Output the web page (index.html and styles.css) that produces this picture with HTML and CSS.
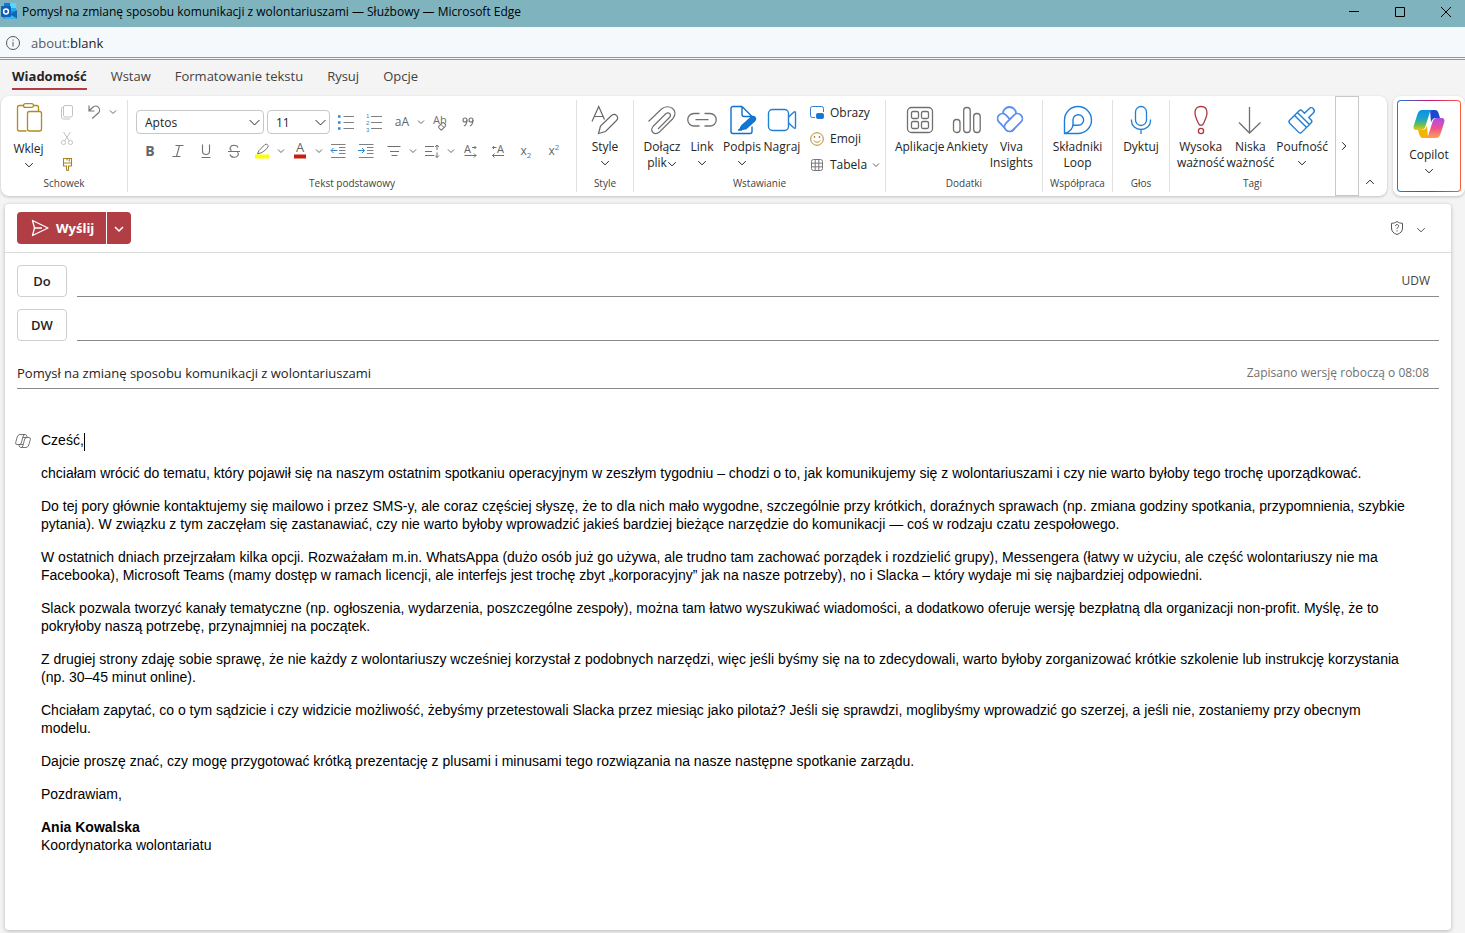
FILE: index.html
```html
<!DOCTYPE html>
<html lang="pl">
<head>
<meta charset="utf-8">
<meta name="viewport" content="width=device-width, initial-scale=1">
<title>Pomysł na zmianę sposobu komunikacji z wolontariuszami</title>
<link rel="stylesheet" href="styles.css">
</head>
<body>
<svg class="defs" width="0" height="0" aria-hidden="true">
  <symbol id="chev" viewBox="0 0 8 8"><path d="M1 2.500 4 5.500 7 2.500" fill="none" stroke="currentColor" stroke-width="1" vector-effect="non-scaling-stroke"/></symbol>
</svg>

<header class="titlebar">
  <svg class="app-icon" viewBox="0 0 18 18" aria-hidden="true">
    <rect x="4" y="0" width="12" height="10" fill="#28a8ea"/>
    <rect x="10" y="0" width="6" height="5" fill="#50d9ff"/>
    <rect x="4" y="0" width="6" height="5" fill="#0f78d4"/>
    <path d="M3 8h14v7.500H3z" fill="#1490df"/>
    <path d="M17 7 10 11.500 17 15.500z" fill="#1066b5"/>
    <path d="M3 15.500 10 11.500 17 15.500z" fill="#35b8f1"/>
    <rect x="1" y="3" width="10" height="11" rx="1" fill="#0f5fb8"/>
    <circle cx="6" cy="8.500" r="2.400" fill="none" stroke="#fff" stroke-width="1.500"/>
  </svg>
  <h1 class="window-title">Pomysł na zmianę sposobu komunikacji z wolontariuszami — Służbowy — Microsoft Edge</h1>
  <div class="window-controls">
    <button type="button" aria-label="Minimalizuj"><svg viewBox="0 0 12 12"><path d="M1 5.500h10" stroke="#000" fill="none"/></svg></button>
    <button type="button" aria-label="Maksymalizuj"><svg viewBox="0 0 12 12"><path d="M1.500 1.500h9v9h-9z" stroke="#000" fill="none"/></svg></button>
    <button type="button" aria-label="Zamknij"><svg viewBox="0 0 12 12"><path d="M1 1 11 11M11 1 1 11" stroke="#000" fill="none"/></svg></button>
  </div>
</header>

<div class="addressbar">
  <svg viewBox="0 0 16 16" aria-hidden="true"><circle cx="8" cy="8" r="6.500" fill="none" stroke="#555"/><path d="M8 7v4.500M8 4.500v1.200" stroke="#555" fill="none"/></svg>
  <span class="url">about:<span class="host">blank</span></span>
</div>

<nav class="tabs" aria-label="Karty wstążki">
  <button type="button" class="tab active">Wiadomość</button>
  <button type="button" class="tab">Wstaw</button>
  <button type="button" class="tab">Formatowanie tekstu</button>
  <button type="button" class="tab">Rysuj</button>
  <button type="button" class="tab">Opcje</button>
</nav>

<div class="ribbon-row">
  <div class="ribbon" role="toolbar" aria-label="Wstążka">
    <section class="group g-clip">
      <div class="group-body">
        <button type="button" class="big paste">
          <svg class="ico" viewBox="0 0 32 32" fill="none" stroke="#b58a1c" stroke-width="1.300"><path d="M10.500 4.500H6.500a2 2 0 0 0-2 2v21.500a2 2 0 0 0 2 2H13.500M20.500 4.500h3a2 2 0 0 1 2 2v3.500"/><rect x="10.500" y="2.600" width="10" height="3.800" rx="1.900"/><rect x="14.500" y="10.500" width="14" height="19.500" rx="2"/></svg>
          <span>Wklej</span><svg class="cv" aria-hidden="true"><use href="#chev"/></svg>
        </button>
        <div class="stack">
          <button type="button" class="tool" aria-label="Kopiuj"><svg viewBox="0 0 16 16" fill="none" stroke="#c3c3c3"><rect x="4.500" y="1.500" width="9" height="11.500" rx="1.500"/><path d="M4 3.500H3.500a1 1 0 0 0-1 1V13a2 2 0 0 0 2 2H11"/></svg></button>
          <button type="button" class="tool" aria-label="Wytnij"><svg viewBox="0 0 16 16" fill="none" stroke="#c3c3c3"><path d="M4.500 2 10.500 11M11.500 2 5.500 11"/><circle cx="4.500" cy="12.500" r="2.100"/><circle cx="11.500" cy="12.500" r="2.100"/></svg></button>
          <button type="button" class="tool" aria-label="Malarz formatów"><svg viewBox="0 0 16 16" fill="none" stroke="#a98424" stroke-width="1.100"><path d="M4.500 2.500h8v7.500h-3v3.500a1 1 0 0 1-2 0V10h-3z"/><path d="M4.500 7h8M8 2.500v2M10.300 2.500v3"/></svg></button>
        </div>
        <div class="undo">
          <button type="button" class="tool" aria-label="Cofnij"><svg viewBox="0 0 16 16" fill="none" stroke="#7a7a7a" stroke-width="1.200"><path d="M3 1.500v5.500h5.500M3.200 6.800 6.600 3.500a4 4 0 0 1 6 5.300L6.200 14.500"/></svg></button>
          <button type="button" class="mini" aria-label="Więcej opcji cofania"><svg class="cs"><use href="#chev"/></svg></button>
        </div>
      </div>
      <h2>Schowek</h2>
    </section>

    <section class="group g-text">
      <div class="group-body rows">
        <div class="line first">
          <label class="combo font-name"><select aria-label="Czcionka"><option>Aptos</option></select><svg><use href="#chev"/></svg></label>
          <label class="combo font-size"><select aria-label="Rozmiar czcionki"><option>11</option></select><svg><use href="#chev"/></svg></label>
          <button type="button" class="tool" aria-label="Punktory"><svg viewBox="0 0 16 16" fill="none" stroke="#808080"><path d="M5.500 2.500H16M5.500 8.500H16M5.500 14.500H16"/><path d="M0 2.500h2.500M0 8.500h2.500M0 14.500h2.500" stroke="#2b88d8" stroke-width="2.500"/></svg></button>
          <button type="button" class="tool" aria-label="Numerowanie"><svg viewBox="0 0 16 16" fill="none" stroke="#808080"><path d="M5 2.500H16M5 8.500H16M5 14.500H16"/><g class="nums"><text x="0" y="4">1</text><text x="0" y="11">2</text><text x="0" y="18">3</text></g></svg></button>
          <button type="button" class="tool glyph" aria-label="Zmień wielkość liter">aA</button>
          <button type="button" class="mini" aria-label="Opcje wielkości liter"><svg class="cs"><use href="#chev"/></svg></button>
          <button type="button" class="tool" aria-label="Wyczyść formatowanie"><svg viewBox="0 0 16 16"><text class="ab" x="1" y="10">Ab</text><rect x="8" y="8.500" width="4.500" height="7" rx="1" transform="rotate(45 10 12)" fill="#fff" stroke="#6e6e6e"/><path d="M9 10.500 12.500 14" stroke="#6e6e6e"/></svg></button>
          <button type="button" class="tool" aria-label="Cytat"><svg viewBox="0 0 16 16" fill="none" stroke="#707070" stroke-width="1.100"><circle cx="5" cy="6" r="2"/><path d="M7 6c0 3-1 5-3 6"/><circle cx="11" cy="6" r="2"/><path d="M13 6c0 3-1 5-3 6"/></svg></button>
        </div>
        <div class="line">
          <button type="button" class="tool glyph bold" aria-label="Pogrubienie">B</button>
          <button type="button" class="tool" aria-label="Kursywa"><svg viewBox="0 0 16 16" fill="none" stroke="#707070" stroke-width="1.100"><path d="M5.500 2.500h8M2.500 13.500h8M9.500 2.500l-3 11"/></svg></button>
          <button type="button" class="tool" aria-label="Podkreślenie"><svg viewBox="0 0 16 16" fill="none" stroke="#707070" stroke-width="1.100"><path d="M4.500 1.500v6.500a3.500 3.500 0 0 0 7 0V1.500M3.500 14.500h9"/></svg></button>
          <button type="button" class="tool" aria-label="Przekreślenie"><svg viewBox="0 0 16 16" fill="none" stroke="#707070" stroke-width="1.100"><path d="M2 8.500h12M12 4.500C11.500 3 10 2.300 8 2.300c-4 0-5 3.700-2.500 5.200M4 11.500c.5 1.800 2 2.700 4 2.700 4 0 5.300-3 3.500-5.200"/></svg></button>
          <button type="button" class="tool marker" aria-label="Wyróżnienie"><svg viewBox="0 0 16 16" fill="none" stroke="#707070"><path d="M5 7.500 11 1.500q2-1.200 3 1T8 9.500L3.500 11z"/><path d="M1 13.500h14" stroke="#ff0" stroke-width="4"/></svg></button>
          <button type="button" class="mini" aria-label="Kolor wyróżnienia"><svg class="cs"><use href="#chev"/></svg></button>
          <button type="button" class="tool" aria-label="Kolor czcionki"><svg viewBox="0 0 16 16"><text class="fc" x="4" y="9">A</text><path d="M2 13.500h12" stroke="#c81e10" stroke-width="4"/></svg></button>
          <button type="button" class="mini" aria-label="Wybierz kolor czcionki"><svg class="cs"><use href="#chev"/></svg></button>
          <button type="button" class="tool" aria-label="Zmniejsz wcięcie"><svg viewBox="0 0 16 16" fill="none" stroke="#808080"><path d="M1 1.500H15.500M9 4.500h6.500M9 7.500h6.500M9 10.500h6.500M1 14.500H15.500"/><path d="M7.500 7.500H1M3.500 5 1 7.500 3.500 10" stroke="#2b88d8"/></svg></button>
          <button type="button" class="tool" aria-label="Zwiększ wcięcie"><svg viewBox="0 0 16 16" fill="none" stroke="#808080"><path d="M1 1.500H15.500M9 4.500h6.500M9 7.500h6.500M9 10.500h6.500M1 14.500H15.500"/><path d="M0 7.500h6.500M4 5l2.500 2.500L4 10" stroke="#2b88d8"/></svg></button>
          <button type="button" class="tool" aria-label="Wyrównanie"><svg viewBox="0 0 16 16" fill="none" stroke="#707070"><path d="M1.500 3.500H14.500M4 8.500h9M5.500 12.500h6"/></svg></button>
          <button type="button" class="mini" aria-label="Opcje wyrównania"><svg class="cs"><use href="#chev"/></svg></button>
          <button type="button" class="tool" aria-label="Interlinia"><svg viewBox="0 0 16 16" fill="none" stroke="#707070"><path d="M1 3.500h9M1 8.500h7M1 12.500h9M13 2v5M13 9.500v5M11 4l2-2 2 2M11 12.500l2 2 2-2"/></svg></button>
          <button type="button" class="mini" aria-label="Opcje interlinii"><svg class="cs"><use href="#chev"/></svg></button>
          <button type="button" class="tool" aria-label="Od lewej do prawej"><svg viewBox="0 0 16 16" fill="none" stroke="#707070"><text class="dir" x="2" y="10">A</text><path d="M10 4.500h4M12.500 3 14 4.500 12.500 6M2.500 12.500H14M12 10.500l2 2-2 2"/></svg></button>
          <button type="button" class="tool" aria-label="Od prawej do lewej"><svg viewBox="0 0 16 16" fill="none" stroke="#707070"><text class="dir" x="7" y="10">A</text><path d="M6.500 4.500H2.500M4 3 2.500 4.500 4 6M14 12.500H2.500M4.500 10.500l-2 2 2 2"/></svg></button>
          <button type="button" class="tool glyph" aria-label="Indeks dolny">x<sub>2</sub></button>
          <button type="button" class="tool glyph" aria-label="Indeks górny">x<sup>2</sup></button>
        </div>
      </div>
      <h2>Tekst podstawowy</h2>
    </section>

    <section class="group g-style">
      <div class="group-body">
        <button type="button" class="big"><svg class="ico" viewBox="0 0 32 32" fill="none" stroke="#666" stroke-width="1.200"><path d="M3 17.500 9.700 2.500 15.500 15.500M5.500 12.500h8.500"/><path d="M9.500 29.500 11.500 22 22.500 11.500c4-3 8 1.500 5 5L16.500 27.500z"/></svg><span>Style</span><svg class="cv"><use href="#chev"/></svg></button>
      </div>
      <h2>Style</h2>
    </section>

    <section class="group g-insert">
      <div class="group-body">
        <button type="button" class="big"><svg class="ico" viewBox="0 0 32 32" fill="none" stroke="#707070" stroke-width="1.200"><path d="M2.500 17.500 15.500 5c7-6 18 1 11.500 9.500L13.500 28c-5 4-10-1-6.500-5.500L20 9.500c3-2 6 1 3.500 4L12 25"/></svg><span>Dołącz<br>plik<svg class="cv in"><use href="#chev"/></svg></span></button>
        <button type="button" class="big"><svg class="ico" viewBox="0 0 32 32" fill="none" stroke="#707070" stroke-width="1.300"><path d="M13.500 9.500H8a6 6 0 0 0 0 12.500h5.500M18.500 9.500H24a6 6 0 0 1 0 12.500h-5.500M9.500 15.700h13"/></svg><span>Link</span><svg class="cv"><use href="#chev"/></svg></button>
        <button type="button" class="big"><svg class="ico" viewBox="0 0 32 32" fill="none" stroke="#0f6fd0" stroke-width="1.400"><path d="M16 2.500H7a2 2 0 0 0-2 2v23a2 2 0 0 0 2 2h17a2 2 0 0 0 2-2v-5M16 2.500v8a2 2 0 0 0 2 2h8M16 2.500l10 10"/><path d="M12 26h4M13 26c2-1 1-2 3-4.500l9-8c3-3 6 1 3.500 3.500l-8.500 7.500z" fill="#0f78d4"/></svg><span>Podpis</span><svg class="cv"><use href="#chev"/></svg></button>
        <button type="button" class="big"><svg class="ico" viewBox="0 0 32 32" fill="none" stroke="#1f7fd6" stroke-width="1.400"><rect x="2.500" y="5.500" width="20" height="21" rx="4"/><path d="M22.500 13 28 8q1.500-1 1.500 1v14q0 2-1.500 1l-5.500-5"/></svg><span>Nagraj</span></button>
        <div class="stack labelled">
          <button type="button" class="small"><svg viewBox="0 0 16 16" fill="none" stroke="#2b7cd3"><path d="M6 12.500H3.500a2 2 0 0 1-2-2v-7a2 2 0 0 1 2-2h9a2 2 0 0 1 2 2V7"/><rect x="7.500" y="8.500" width="7" height="5" rx="1" fill="#0f78d4"/></svg>Obrazy</button>
          <button type="button" class="small"><svg viewBox="0 0 16 16" fill="none" stroke="#b5892b"><circle cx="8" cy="8" r="6.300"/><path d="M4.800 9.500c1.500 2.300 5 2.300 6.400 0"/><path d="M5.500 5v2M10.500 5v2" stroke-width="1.300"/></svg>Emoji</button>
          <button type="button" class="small"><svg viewBox="0 0 16 16" fill="none" stroke="#777"><rect x="2.500" y="2.500" width="11" height="11" rx="2"/><path d="M6.200 2.500v11M9.800 2.500v11M2.500 6.200h11M2.500 9.800h11"/></svg>Tabela<svg class="cs tail"><use href="#chev"/></svg></button>
        </div>
      </div>
      <h2>Wstawianie</h2>
    </section>

    <section class="group g-addins">
      <div class="group-body">
        <button type="button" class="big"><svg class="ico" viewBox="0 0 32 32" fill="none" stroke="#707070" stroke-width="1.300"><rect x="3.500" y="3.500" width="25" height="25" rx="4"/><rect x="7.500" y="7.500" width="7" height="7" rx="1.500"/><rect x="17.500" y="7.500" width="7" height="7" rx="1.500"/><rect x="7.500" y="17.500" width="7" height="7" rx="1.500"/><rect x="17.500" y="17.500" width="7" height="7" rx="1.500"/></svg><span>Aplikacje</span></button>
        <button type="button" class="big"><svg class="ico" viewBox="0 0 32 32" fill="none" stroke="#707070" stroke-width="1.300"><rect x="2.500" y="15.500" width="6.500" height="13" rx="3"/><rect x="12.700" y="3.500" width="6.500" height="25" rx="3"/><rect x="22.700" y="9.500" width="6.500" height="19" rx="3"/></svg><span>Ankiety</span></button>
        <button type="button" class="big viva"><svg class="ico" viewBox="0 0 32 32" fill="none" stroke-linecap="round"><circle cx="14.500" cy="9.500" r="6.500" stroke="#5b8def" stroke-width="1.800"/><path d="M7.500 14.500 15 22.500" stroke="#5b8def" stroke-width="11.500"/><path d="M7.500 14.500 15 22.500" stroke="#fff" stroke-width="8"/><path d="M22.500 14.500 14.500 22.500" stroke="#5b8def" stroke-width="11.500"/><path d="M22.500 14.500 14.500 22.500" stroke="#fff" stroke-width="8"/></svg><span>Viva<br>Insights</span></button>
      </div>
      <h2>Dodatki</h2>
    </section>

    <section class="group g-loop">
      <div class="group-body">
        <button type="button" class="big"><svg class="ico" viewBox="0 0 32 32" fill="none" stroke="#1f7fd6" stroke-width="1.400"><path d="M2.500 29.500V16A13.500 13.500 0 1 1 16 29.500zM2.500 29.500c5-1.500 8.500-5 8.500-9.500v-4a5.300 5.300 0 1 1 5.300 5.300H11"/></svg><span>Składniki<br>Loop</span></button>
      </div>
      <h2>Współpraca</h2>
    </section>

    <section class="group g-voice">
      <div class="group-body">
        <button type="button" class="big"><svg class="ico" viewBox="0 0 32 32" fill="none" stroke="#1f7fd6" stroke-width="1.300"><rect x="10.500" y="2.500" width="11" height="19" rx="5.500"/><path d="M6.500 15.500v1.500a9.500 8.500 0 0 0 19 0v-1.500M16 25.500v4.500"/></svg><span>Dyktuj</span></button>
      </div>
      <h2>Głos</h2>
    </section>

    <section class="group g-tags">
      <div class="group-body">
        <button type="button" class="big"><svg class="ico" viewBox="0 0 32 32" fill="none" stroke="#b0363c" stroke-width="1.300"><path d="M16 2.500c4 0 6 2.500 6 6 0 4-2 8-3.500 11-1 2.500-4 2.500-5 0C12 16.500 10 12.500 10 8.500c0-3.500 2-6 6-6z"/><circle cx="16" cy="27" r="2.600"/></svg><span>Wysoka<br>ważność</span></button>
        <button type="button" class="big"><svg class="ico" viewBox="0 0 32 32" fill="none" stroke="#707070" stroke-width="1.300"><path d="M15.500 3v26M5 18.500 15.500 29 26.500 18.500"/></svg><span>Niska<br>ważność</span></button>
        <button type="button" class="big"><svg class="ico" viewBox="0 0 32 32" fill="none" stroke="#1f7fd6" stroke-width="1.400" stroke-linejoin="round"><g transform="rotate(45 16 16)"><path d="M13 9.500V3a3 3 0 0 1 6 0v6.500h3.500a2 2 0 0 1 2 2V25a2 2 0 0 1-2 2h-13a2 2 0 0 1-2-2V11.500a2 2 0 0 1 2-2zM7.500 14h17M7.500 18h17"/></g></svg><span>Poufność</span><svg class="cv"><use href="#chev"/></svg></button>
      </div>
      <h2>Tagi</h2>
    </section>

    <button type="button" class="more" aria-label="Więcej opcji"><svg class="cv right"><use href="#chev"/></svg></button>
    <button type="button" class="collapse" aria-label="Zwiń wstążkę"><svg class="cv up"><use href="#chev"/></svg></button>
  </div>

  <div class="copilot-card">
    <button type="button" class="copilot">
      <svg class="ico" viewBox="0 0 32 32" aria-hidden="true">
        <defs>
          <linearGradient id="ca" x1="0" y1="0" x2="0" y2="1"><stop offset="0" stop-color="#0a8fe8"/><stop offset=".45" stop-color="#1ea6c9"/><stop offset=".75" stop-color="#6cc04a"/><stop offset="1" stop-color="#f2c811"/></linearGradient>
          <linearGradient id="cb" x1="0" y1="0" x2="0" y2="1"><stop offset="0" stop-color="#a84df0"/><stop offset=".5" stop-color="#ee5090"/><stop offset="1" stop-color="#ffa34d"/></linearGradient>
        </defs>
        <path d="M17 2h5q2.500 0 3.500 3l1.500 5h-4c-3 0-4 1.500-5 4.500z" fill="#1b48cf"/>
        <path d="M15 30h-5q-2.500 0-3.500-3L5 22h4c3 0 4-1.500 5-4.500z" fill="#f4b400"/>
        <path d="M9 2h11c-2 0-3 1.500-3.500 3.500L12.500 18c-1 3-2 4-4.500 4H4c-3.500 0-4-2-3-5L4.500 6Q6 2 9 2z" fill="url(#ca)"/>
        <path d="M23 30H12c2 0 3-1.500 3.500-3.500L19.500 14c1-3 2-4 4.500-4h4c3.500 0 4 2 3 5l-3.500 11q-1.500 4-4.500 4z" fill="url(#cb)"/>
      </svg>
      <span>Copilot</span><svg class="cv"><use href="#chev"/></svg>
    </button>
  </div>
</div>

<main class="mail">
  <div class="actions">
    <div class="send-split">
      <button type="button" class="send"><svg viewBox="0 0 18 18" fill="none" stroke="#fff" stroke-width="1.300" stroke-linejoin="round"><path d="M1.500 1.500 17 9 1.500 16.500 3.500 9zM3.500 9H11"/></svg>Wyślij</button>
      <button type="button" class="send-more" aria-label="Więcej opcji wysyłania"><svg class="cl" viewBox="0 0 12 12" fill="none" stroke="#fff" stroke-width="1.500"><path d="M2 5l4 4 4-4"/></svg></button>
    </div>
    <div class="sensitivity">
      <button type="button" aria-label="Poufność wiadomości"><svg class="shield" viewBox="0 0 16 16" fill="none" stroke="#555"><path d="M8 1.500c1.500 1.200 3.200 1.700 5.500 1.800V8c0 3.300-2 5.300-5.500 6.500C4.500 13.300 2.500 11.300 2.500 8V3.300C4.800 3.200 6.500 2.700 8 1.500z"/><path d="M6.300 6.200c0-2.300 3.500-2 3.300 0C9.500 7.500 8 7.500 8 9M8 10.200v1.200"/></svg></button>
      <button type="button" aria-label="Opcje poufności"><svg class="cv soft"><use href="#chev"/></svg></button>
    </div>
  </div>

  <div class="fields">
    <div class="recipient">
      <button type="button" class="pick">Do</button>
      <div class="well"><input type="text" aria-label="Do"><button type="button" class="bcc">UDW</button></div>
    </div>
    <div class="recipient">
      <button type="button" class="pick">DW</button>
      <div class="well"><input type="text" aria-label="DW"></div>
    </div>
    <div class="subject">
      <input type="text" aria-label="Temat" value="Pomysł na zmianę sposobu komunikacji z wolontariuszami">
      <span class="saved">Zapisano wersję roboczą o 08:08</span>
    </div>
  </div>

  <div class="editor">
    <button type="button" class="hint" aria-label="Copilot w wierszu"><svg viewBox="0 0 16 16" fill="none" stroke="#666" stroke-width=".9"><path d="M5 1.500h5q1.300 0 1.800 1.500l.5 1.500H14q1.800 0 1.300 2l-1.500 5.500q-.8 2.500-2.800 2.500H6q-1.300 0-1.800-1.500L3.700 11.500H2Q.2 11.500.7 9.500L2.200 4Q3 1.500 5 1.500zM10 1.500Q8.700 1.500 8.200 3L6.300 10q-.5 1.500-2.600 1.500M6 14.500q1.300 0 1.800-1.500L9.700 6q.5-1.500 2.600-1.500M7.800 4.500h4.500M3.700 11.500h4.500"/></svg></button>
    <div class="message" role="textbox" aria-label="Treść wiadomości" aria-multiline="true">
      <p>Cześć,<span class="caret"></span></p>
      <p>chciałam wrócić do tematu, który pojawił się na naszym ostatnim spotkaniu operacyjnym w zeszłym tygodniu – chodzi o to, jak komunikujemy się z wolontariuszami i czy nie warto byłoby tego trochę uporządkować.</p>
      <p>Do tej pory głównie kontaktujemy się mailowo i przez SMS-y, ale coraz częściej słyszę, że to dla nich mało wygodne, szczególnie przy krótkich, doraźnych sprawach (np. zmiana godziny spotkania, przypomnienia, szybkie pytania). W związku z tym zaczęłam się zastanawiać, czy nie warto byłoby wprowadzić jakieś bardziej bieżące narzędzie do komunikacji — coś w rodzaju czatu zespołowego.</p>
      <p>W ostatnich dniach przejrzałam kilka opcji. Rozważałam m.in. WhatsAppa (dużo osób już go używa, ale trudno tam zachować porządek i rozdzielić grupy), Messengera (łatwy w użyciu, ale część wolontariuszy nie ma Facebooka), Microsoft Teams (mamy dostęp w ramach licencji, ale interfejs jest trochę zbyt „korporacyjny” jak na nasze potrzeby), no i Slacka – który wydaje mi się najbardziej odpowiedni.</p>
      <p>Slack pozwala tworzyć kanały tematyczne (np. ogłoszenia, wydarzenia, poszczególne zespoły), można tam łatwo wyszukiwać wiadomości, a dodatkowo oferuje wersję bezpłatną dla organizacji non-profit. Myślę, że to pokryłoby naszą potrzebę, przynajmniej na początek.</p>
      <p>Z drugiej strony zdaję sobie sprawę, że nie każdy z wolontariuszy wcześniej korzystał z podobnych narzędzi, więc jeśli byśmy się na to zdecydowali, warto byłoby zorganizować krótkie szkolenie lub instrukcję korzystania (np. 30–45 minut online).</p>
      <p>Chciałam zapytać, co o tym sądzicie i czy widzicie możliwość, żebyśmy przetestowali Slacka przez miesiąc jako pilotaż? Jeśli się sprawdzi, moglibyśmy wprowadzić go szerzej, a jeśli nie, zostaniemy przy obecnym modelu.</p>
      <p>Dajcie proszę znać, czy mogę przygotować krótką prezentację z plusami i minusami tego rozwiązania na nasze następne spotkanie zarządu.</p>
      <p>Pozdrawiam,</p>
      <p><strong>Ania Kowalska</strong><br>Koordynatorka wolontariatu</p>
    </div>
  </div>
</main>
</body>
</html>
```
FILE: styles.css
```css
* { box-sizing: border-box; }

body {
  margin: 0;
  min-height: 100vh;
  display: flex;
  flex-direction: column;
  background: #f4f4f4;
  color: #242424;
  font: 13px/20px "Open Sans", "Noto Sans", sans-serif;
}

button, input, select { font: inherit; color: inherit; }
button { background: none; border: 0; padding: 0; }
h1, h2, p { margin: 0; font-weight: 400; }
svg { display: block; flex: none; }
.defs { position: absolute; }

/* window chrome */
.titlebar {
  display: flex;
  align-items: center;
  height: 27px;
  padding-bottom: 3px;
  background: #7fb4be;
  color: #000;
}
.app-icon { width: 18px; height: 18px; }
.window-title { flex: 1; margin-left: 4px; font-size: 12px; line-height: 20px; }
.window-controls { display: flex; }
.window-controls button { width: 46px; height: 24px; display: grid; place-items: center; }
.window-controls button:last-child { width: 42px; padding-left: 4px; }
.window-controls svg { width: 12px; height: 12px; }

.addressbar {
  display: flex;
  align-items: center;
  gap: 10px;
  height: 33px;
  padding: 2px 5px 0;
  background: #f5f9fb;
  border-bottom: 3px double #7f9f9f;
}
.addressbar svg { width: 16px; height: 16px; }
.url { color: #5a5a5a; font-size: 13px; }
.host { color: #1b1b1b; }

/* ribbon tabs */
.tabs { display: flex; gap: 24px; height: 36px; padding: 5px 12px; }
.tab { height: 25px; padding-bottom: 1px; border-bottom: 2px solid transparent; color: #424242; line-height: 20px; }
.tab.active { font-weight: 700; color: #242424; border-color: #b33c44; }

/* ribbon */
.ribbon-row { display: flex; gap: 6px; padding-left: 1px; }
.ribbon, .copilot-card {
  background: #fff;
  border-radius: 8px;
  box-shadow: 0 1px 3px rgba(0, 0, 0, .22);
}
.ribbon { flex: 1; display: flex; font-size: 12px; line-height: 16px; }
.group {
  display: flex;
  flex-direction: column;
  margin: 4px 0;
  border-right: 1px solid #e0e0e0;
}
.group-body { display: flex; height: 75px; padding-top: 4px; justify-content: center; }
.group h2 { font-size: 10px; line-height: 16px; text-align: center; color: #424242; }
.g-clip { width: 127px; }
.g-text { width: 449px; }
.g-style { width: 57px; }
.g-insert { width: 252px; }
.g-addins { width: 157px; }
.g-loop { width: 70px; }
.g-voice { width: 57px; }
.g-tags { width: 165px; border-right: 0; }
.g-clip .group-body, .g-insert .group-body { justify-content: flex-start; }
.g-insert .group-body { padding-left: 8px; }
.g-addins .group-body, .g-tags .group-body { gap: 2px; }

.big { display: flex; flex-direction: column; align-items: center; min-width: 40px; }
.big > span { margin-top: 3px; }
.ico { width: 32px; height: 32px; }
.cv { width: 10px; height: 10px; margin-top: 3px; }
.cs { width: 8px; height: 8px; }
.cl { width: 12px; height: 12px; }
.cv.in { display: inline-block; margin: 0; vertical-align: -2px; }
.paste { width: 55px; margin-top: -3px; }
.paste > span { margin-top: 8px; }

.tool { width: 28px; height: 24px; flex: none; display: grid; place-items: center; }
.tool svg { width: 16px; height: 16px; overflow: visible; }
.mini { width: 10px; height: 24px; display: grid; place-items: center; color: #666; }
.stack { display: flex; flex-direction: column; margin-top: -4px; gap: 2px; }
.g-clip .stack { width: 22px; align-items: center; }
.undo { display: flex; align-items: flex-start; margin: -4px 0 0 2px; }

.rows { flex-direction: column; justify-content: flex-start; padding: 10px 8px 0; gap: 5px; }
.line { display: flex; height: 24px; }
.combo { position: relative; display: flex; margin-right: 3px; }
.combo.font-size { margin-right: 2px; }
.combo select {
  appearance: none;
  width: 100%;
  height: 24px;
  padding: 1px 20px 0 8px;
  background: #fff;
  border: 1px solid #c7c7c7;
  border-radius: 4px;
}
.combo svg { position: absolute; right: 3px; top: 6px; width: 13px; height: 13px; pointer-events: none; }
.font-name { width: 128px; }
.font-size { width: 63px; }
.glyph { display: flex; align-items: center; justify-content: center; color: #666; }
.glyph.bold { font-size: 14px; font-weight: 700; }
.glyph sub, .glyph sup { font-size: 8px; line-height: 8px; color: #2b88d8; }
.glyph sub { align-self: flex-end; margin-bottom: 4px; }
.glyph sup { align-self: flex-start; margin-top: 4px; }
.nums text { font-family: "Liberation Sans", sans-serif; font-size: 6px; fill: #2b88d8; stroke: none; }
.ab { font-size: 11px; fill: #6e6e6e; }
.fc { font-size: 13px; fill: #666; }
.dir { font-size: 11px; fill: #666; stroke: none; }

.small { display: flex; align-items: center; gap: 5px; height: 24px; flex: none; }
.small > svg:first-child { width: 16px; height: 16px; }
.labelled { margin: -3px 0 0 7px; }
.tail { color: #666; }

.more {
  width: 24px;
  display: grid;
  place-items: center;
  padding-right: 6px;
  border: 1px solid #c8c8c8;
}
.right { margin: 0; transform: rotate(-90deg); }
.collapse { margin-top: auto; padding: 9px 6px; }
.up { margin: 0; transform: rotate(180deg); }

.copilot-card { padding: 4px; }
.copilot {
  width: 64px;
  height: 92px;
  display: flex;
  flex-direction: column;
  align-items: center;
  padding-top: 7px;
  border: 1px solid transparent;
  border-radius: 4px;
  background: linear-gradient(#fff, #fff) padding-box, linear-gradient(90deg, #0f86d8, #c3127f 50%, #ff5f3d) border-box;
  font-size: 12px;
  line-height: 16px;
}
.copilot span { margin-top: 7px; }

/* message card */
.mail {
  flex: 1;
  margin: 8px 14px 4px 5px;
  background: #fff;
  border-radius: 4px;
  box-shadow: 0 1px 4px rgba(0, 0, 0, .25);
}
.actions {
  display: flex;
  justify-content: space-between;
  align-items: center;
  padding: 8px 12px;
  border-bottom: 1px solid #dcdcdc;
}
.send-split { display: flex; gap: 1px; }
.send, .send-more { height: 32px; background: #b13e45; color: #fff; display: flex; align-items: center; }
.send { gap: 7px; padding: 0 12px 0 14px; border-radius: 4px 0 0 4px; font-weight: 700; }
.send svg { width: 18px; height: 18px; }
.send-more { width: 24px; justify-content: center; border-radius: 0 4px 4px 0; }
.sensitivity { display: flex; align-items: center; gap: 11px; margin-right: 13px; }
.shield { width: 16px; height: 16px; }
.soft { color: #555; }

.fields { padding: 12px 12px 0; }
.recipient { display: flex; gap: 10px; margin-bottom: 12px; }
.pick { width: 50px; height: 32px; border: 1px solid #cfcfcf; border-radius: 4px; font-weight: 600; }
.well, .subject { flex: 1; display: flex; align-items: center; border-bottom: 1px solid #8a8a8a; }
.well input, .subject input { flex: 1; min-width: 0; height: 28px; padding: 0; border: 0; outline: 0; background: none; }
.bcc { margin-right: 9px; font-size: 12px; color: #424242; }
.subject { height: 36px; padding-top: 5px; }
.saved { margin-right: 10px; font-size: 12px; color: #707070; }

.editor { display: flex; gap: 10px; padding: 42px 12px 76px 10px; }
.hint { width: 16px; height: 20px; display: grid; place-items: center; }
.hint svg { width: 16px; height: 16px; }
.message { flex: 1; max-width: 1370px; color: #000; font: 14px/18px "Liberation Sans", sans-serif; }
.message p + p { margin-top: 15px; }
.message strong { font-weight: 700; }
.caret { display: inline-block; width: 1px; height: 18px; margin: -2px 0; background: #000; vertical-align: -4px; }
```
